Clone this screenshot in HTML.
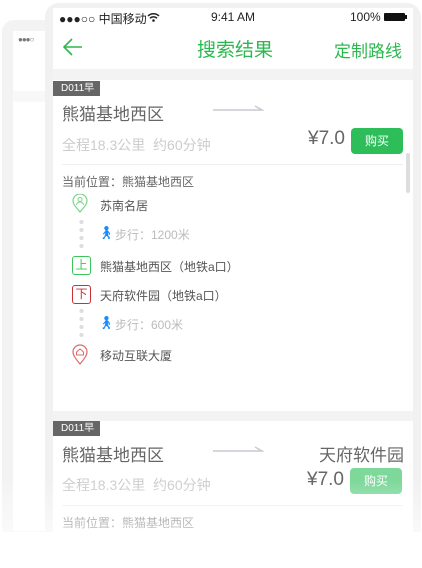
<!DOCTYPE html>
<html><head><meta charset="utf-8"><style>
*{margin:0;padding:0;box-sizing:border-box}
body{width:422px;height:568px;background:#fff;position:relative;overflow:hidden;font-family:"Liberation Sans","Noto Sans CJK SC",sans-serif}
.a{position:absolute;white-space:nowrap}
</style></head><body>
<!-- back phone -->
<div class="a" style="left:2px;top:20px;width:80px;height:520px;background:#f3f3f3;border-radius:12px"></div>
<div class="a" style="left:13px;top:31px;width:60px;height:500px;background:#fff"></div>
<div class="a" style="left:13px;top:91px;width:60px;height:11px;background:#f8f8f8"></div>
<div class="a" style="left:18px;top:35px;font-size:8px;color:#777;letter-spacing:-1px">●●●○</div>
<!-- front phone -->
<div class="a" style="left:45px;top:3px;width:376px;height:540px;background:#f1f1f1;border-radius:14px"></div>
<div class="a" style="left:53px;top:8px;width:360px;height:530px;background:#f3f3f3"></div>
<!-- status -->
<div class="a" style="left:53px;top:8px;width:360px;height:61px;background:#fff"></div>
<div class="a" style="left:59px;top:10px;font-size:12px;color:#222">●●●○○ 中国移动</div>
<svg class="a" style="left:147px;top:12px" width="13" height="10"><path d="M1 4A8 8 0 0 1 12 4M3 6.3A5 5 0 0 1 10 6.3" stroke="#222" stroke-width="1.5" fill="none"/><circle cx="6.5" cy="8.5" r="1.3" fill="#222"/></svg>
<div class="a" style="left:211px;top:10px;font-size:12px;color:#222">9:41 AM</div>
<div class="a" style="left:350px;top:10px;font-size:12px;color:#222">100%</div>
<div class="a" style="left:384px;top:13px;width:21px;height:8px;background:#111;border-radius:1px"></div>
<div class="a" style="left:405px;top:15px;width:2px;height:4px;background:#111"></div>
<!-- nav -->
<svg class="a" style="left:62px;top:37px" width="22" height="20"><path d="M20 10H2M10 2L2 10L10 18" stroke="#2db84f" stroke-width="1.6" fill="none"/></svg>
<div class="a" style="left:197px;top:35px;font-size:19px;color:#2db84f">搜索结果</div>
<div class="a" style="left:334px;top:37px;font-size:17px;color:#2db84f">定制路线</div>
<!-- card1 -->
<div class="a" style="left:53px;top:80px;width:360px;height:331px;background:#fff"></div>
<div class="a" style="left:53px;top:81px;width:47px;height:15px;background:#666;color:#fff;font-size:10px;line-height:15px;padding-left:8px">D011早</div>
<div class="a" style="left:62px;top:100px;font-size:17px;color:#666">熊猫基地西区</div>
<svg class="a" style="left:212px;top:104px" width="52" height="8"><path d="M1 6H50L43 2" stroke="#c9c9d0" stroke-width="1.5" fill="none"/></svg>
<div class="a" style="left:62px;top:135px;font-size:14px;color:#ccc">全程18.3公里&nbsp;&nbsp;约60分钟</div>
<div class="a" style="left:308px;top:128px;font-size:19px;color:#666">¥7.0</div>
<div class="a" style="left:351px;top:128px;width:52px;height:26px;background:#2dbe5a;border-radius:4px;color:#fff;font-size:12px;line-height:26px;text-align:center">购买</div>
<div class="a" style="left:406px;top:153px;width:4px;height:40px;background:#ddd;border-radius:2px"></div>
<div class="a" style="left:62px;top:164px;width:341px;height:1px;background:#eee"></div>
<div class="a" style="left:62px;top:173px;font-size:12px;color:#666">当前位置：熊猫基地西区</div>
<svg class="a" style="left:72px;top:194px" width="18" height="20"><path d="M8 18C3 12 1 10 1 7A7 7 0 0 1 15 7C15 10 13 12 8 18Z" stroke="#7ed38b" fill="none" stroke-width="1.2"/><circle cx="8" cy="5.5" r="2" stroke="#7ed38b" fill="none"/><path d="M4.5 11a3.5 3 0 0 1 7 0" stroke="#7ed38b" fill="none"/></svg>
<div class="a" style="left:100px;top:197px;font-size:12px;color:#555">苏南名居</div>
<div class="a" style="left:79px;top:218px;width:5px;height:34px;background:radial-gradient(circle,#ddd 2px,transparent 2.2px) 0 0/5px 8px"></div>
<div class="a" style="left:98px;top:225px;font-size:13px;color:#1a8cff">🚶︎</div>
<div class="a" style="left:115px;top:226px;font-size:12px;color:#bbb">步行：1200米</div>
<div class="a" style="left:72px;top:256px;width:19px;height:19px;border:1.2px solid #3cc35a;border-radius:3px;color:#3cc35a;font-size:12px;line-height:16px;text-align:center">上</div>
<div class="a" style="left:100px;top:258px;font-size:12px;color:#555">熊猫基地西区（地铁a口）</div>
<div class="a" style="left:72px;top:285px;width:19px;height:19px;border:1.2px solid #c8303a;border-radius:3px;color:#c8303a;font-size:12px;line-height:16px;text-align:center">下</div>
<div class="a" style="left:100px;top:287px;font-size:12px;color:#555">天府软件园（地铁a口）</div>
<div class="a" style="left:79px;top:307px;width:5px;height:34px;background:radial-gradient(circle,#ddd 2px,transparent 2.2px) 0 0/5px 8px"></div>
<div class="a" style="left:98px;top:315px;font-size:13px;color:#1a8cff">🚶︎</div>
<div class="a" style="left:115px;top:316px;font-size:12px;color:#bbb">步行：600米</div>
<svg class="a" style="left:72px;top:344px" width="18" height="22"><path d="M8 20C3 14 1 11 1 8A7 7 0 0 1 15 8C15 11 13 14 8 20Z" stroke="#e06868" fill="none" stroke-width="1.2"/><path d="M4.5 8L8 5L11.5 8V11H4.5Z" stroke="#e06868" fill="none"/></svg>
<div class="a" style="left:100px;top:347px;font-size:12px;color:#555">移动互联大厦</div>
<!-- card2 -->
<div class="a" style="left:53px;top:421px;width:360px;height:120px;background:#fff"></div>
<div class="a" style="left:53px;top:421px;width:47px;height:15px;background:#666;color:#fff;font-size:10px;line-height:15px;padding-left:8px">D011早</div>
<div class="a" style="left:62px;top:441px;font-size:17px;color:#666">熊猫基地西区</div>
<svg class="a" style="left:212px;top:445px" width="52" height="8"><path d="M1 6H50L43 2" stroke="#c9c9d0" stroke-width="1.5" fill="none"/></svg>
<div class="a" style="left:319px;top:441px;font-size:17px;color:#666">天府软件园</div>
<div class="a" style="left:62px;top:475px;font-size:14px;color:#ccc">全程18.3公里&nbsp;&nbsp;约60分钟</div>
<div class="a" style="left:307px;top:469px;font-size:19px;color:#666">¥7.0</div>
<div class="a" style="left:350px;top:468px;width:52px;height:26px;background:#7dd89a;border-radius:4px;color:#fff;font-size:12px;line-height:26px;text-align:center">购买</div>
<div class="a" style="left:62px;top:505px;width:341px;height:1px;background:#eee"></div>
<div class="a" style="left:62px;top:514px;font-size:12px;color:#777">当前位置：熊猫基地西区</div>
<div class="a" style="left:0;top:480px;width:422px;height:52px;background:linear-gradient(rgba(255,255,255,0),rgba(255,255,255,.6))"></div>
<div class="a" style="left:0;top:532px;width:422px;height:36px;background:#fff"></div>
</body></html>
